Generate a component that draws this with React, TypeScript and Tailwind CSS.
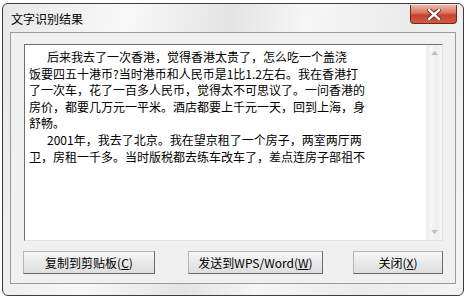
import React from "react";

const lines = [
  { text: "后来我去了一次香港，觉得香港太贵了，怎么吃一个盖浇", indent: true },
  { text: "饭要四五十港币?当时港币和人民币是1比1.2左右。我在香港打", indent: false },
  { text: "了一次车，花了一百多人民币，觉得太不可思议了。一问香港的", indent: false },
  { text: "房价，都要几万元一平米。酒店都要上千元一天，回到上海，身", indent: false },
  { text: "舒畅。", indent: false },
  { text: "2001年，我去了北京。我在望京租了一个房子，两室两厅两", indent: true },
  { text: "卫，房租一千多。当时版税都去练车改车了，差点连房子部祖不", indent: false },
];

function Btn({ label, hot, w }: { label: string; hot: string; w: string }) {
  return (
    <button
      className={`${w} h-[23px] flex items-center justify-center text-[12px] text-black border border-t-[#b5b5b5] border-l-[#b5b5b5] border-r-[#6a6a6a] border-b-[#6a6a6a] bg-[linear-gradient(#f7f7f7,#e9e9e9_50%,#dedede)]`}
    >
      {label}(<span className="underline">{hot}</span>)
    </button>
  );
}

export default function App() {
  return (
    <div className="w-[467px] h-[301px] bg-white overflow-hidden font-['Noto_Sans_CJK_SC',sans-serif]">
      {/* window frame */}
      <div className="relative ml-[2px] mt-[3px] w-[462px] h-[293px] rounded-[6px] border border-[#3d3d3d] bg-[linear-gradient(100deg,#e8e8e8,#f8f8f8_25%,#e4e4e4_45%,#f6f6f6_60%,#ebebeb_80%,#f4f4f4)] px-[7px] pb-[11px] flex flex-col">
        <div className="h-[28px] flex items-center pl-[1px] pt-[1px] text-[12px] text-black">文字识别结果</div>

        {/* close button */}
        <div className="absolute top-[1px] left-[407px] w-[47px] h-[19px] rounded-b-[4px] border border-t-0 border-[#6b2a1f] bg-[linear-gradient(#efb7a7,#d9735c_45%,#c4432d_55%,#d45a3f)] flex items-center justify-center">
          <svg width="14" height="11" viewBox="0 0 14 11">
            <path d="M2 1 L12 10 M12 1 L2 10" stroke="#5a2118" strokeWidth="4.2" strokeLinecap="square" />
            <path d="M2 1 L12 10 M12 1 L2 10" stroke="#ffffff" strokeWidth="2.4" strokeLinecap="square" />
          </svg>
        </div>

        {/* client area */}
        <div className="flex-1 border border-[#9a9a9a] bg-[#f0f0f0] px-[12px] pt-[11px] pb-[7px] flex flex-col">
          <div className="h-[197px] ml-[1px] flex border border-t-[#6d6d6d] border-l-[#6d6d6d] border-r-[#e3e3e3] border-b-[#e3e3e3] bg-white">
            <div className="flex-1 pl-[4px] pt-[4px] text-[12px] leading-[16.6px] text-black whitespace-nowrap">
              {lines.map((l, i) => (
                <div key={i} className={l.indent ? "pl-[18px]" : ""}>
                  {l.text}
                </div>
              ))}
            </div>
            {/* disabled scrollbar */}
            <div className="w-[16px] flex flex-col justify-between bg-[linear-gradient(90deg,#ececec,#f7f7f7_30%,#ededed_60%,#f4f4f4)] border-l border-[#f0f0f0]">
              <div className="h-[16px] flex items-center justify-center">
                <svg width="7" height="4" viewBox="0 0 7 4">
                  <path d="M0 4 L3.5 0 L7 4 Z" fill="#bfbfbf" />
                </svg>
              </div>
              <div className="h-[16px] flex items-center justify-center">
                <svg width="7" height="4" viewBox="0 0 7 4">
                  <path d="M0 0 L3.5 4 L7 0 Z" fill="#bfbfbf" />
                </svg>
              </div>
            </div>
          </div>

          <div className="mt-[10px] flex">
            <Btn label="复制到剪贴板" hot="C" w="w-[134px]" />
            <div className="ml-[33px]">
              <Btn label="发送到WPS/Word" hot="W" w="w-[135px]" />
            </div>
            <div className="ml-[30px]">
              <Btn label="关闭" hot="X" w="w-[90px]" />
            </div>
          </div>
        </div>
      </div>
    </div>
  );
}
